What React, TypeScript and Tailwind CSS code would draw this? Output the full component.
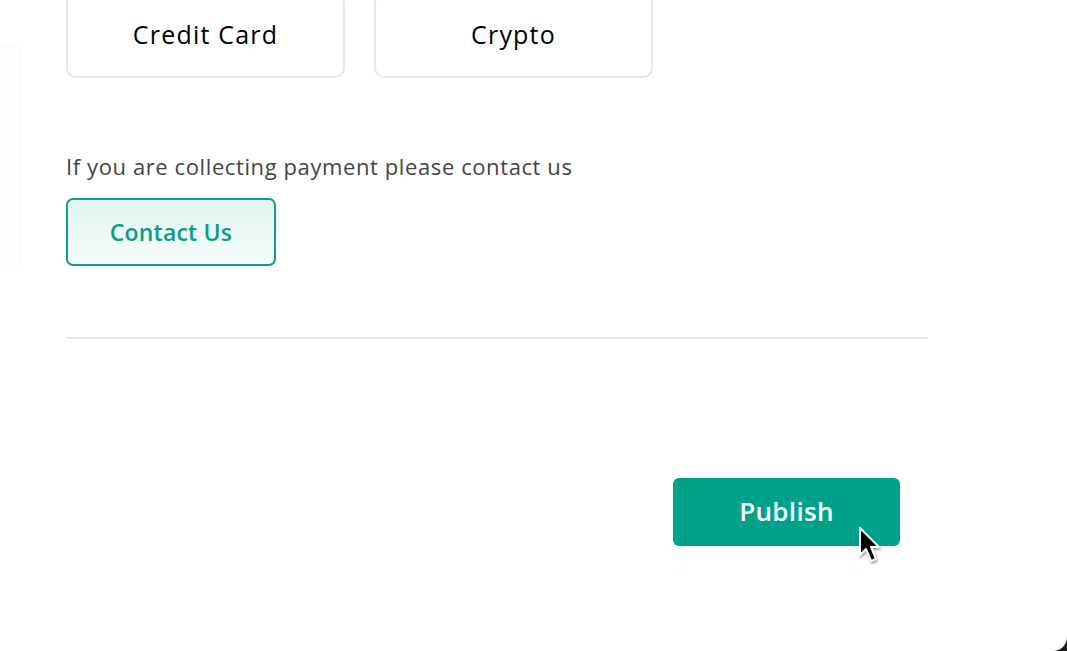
import React from 'react';

const font = { fontFamily: '"Open Sans", Lato, sans-serif' };

function Cursor() {
  return (
    <svg width="26" height="40" viewBox="0 0 26 40" className="absolute left-[856px] top-[525px]">
      <path d="M4 3 L4 30 L10 24 L15 36 L20 34 L15 22 L23 22 Z" fill="#000" stroke="#fff" strokeWidth="2" strokeLinejoin="round" style={{ filter: 'drop-shadow(1px 2px 1px rgba(0,0,0,0.35))' }} />
    </svg>
  );
}

export default function App() {
  return (
    <div className="w-[1067px] h-[651px] bg-[#1c1c1a] overflow-hidden" style={font}>
      <div className="relative w-full h-full bg-white rounded-br-[14px] flex">
        {/* faint panel edge on the left */}
        <div className="mt-[44px] h-[228px] w-[22px] bg-[#fcfdfd] border-r border-[#f7f9f9] rounded-r-[10px]" />

        <div className="ml-[44px] w-[862px] flex flex-col">
          <div className="flex gap-[29px] mt-[-7px]">
            <div className="w-[279px] h-[85px] pb-[2px] border-2 border-[#e3e8ef] rounded-[10px] flex items-center justify-center text-[25px] tracking-[1.2px] text-black">
              Credit Card
            </div>
            <div className="w-[279px] h-[85px] pb-[2px] border-2 border-[#e3e8ef] rounded-[10px] flex items-center justify-center text-[25px] tracking-[1.2px] text-black">
              Crypto
            </div>
          </div>

          <p className="mt-[74px] text-[22px] leading-[28px] mb-[2px] tracking-[0.6px] text-[#444]">
            If you are collecting payment please contact us
          </p>

          <button className="mt-[16px] w-[210px] h-[68px] border-2 border-[#0ea08a] rounded-[7px] bg-gradient-to-b from-[#e2f4f0] to-[#f6fbfa] text-[23px] tracking-[0.2px] font-semibold text-[#0a9d86]">
            Contact Us
          </button>

          <div className="mt-[71px] h-[2px] bg-[#e3e8f1]" />

          <div className="flex justify-end mt-[139px] pr-[28px]">
            <button className="w-[227px] h-[68px] pb-[2px] rounded-[6px] bg-[#00a189] text-white text-[26px] tracking-[0.3px] font-semibold">
              Publish
            </button>
          </div>
        </div>
        <Cursor />
      </div>
    </div>
  );
}
